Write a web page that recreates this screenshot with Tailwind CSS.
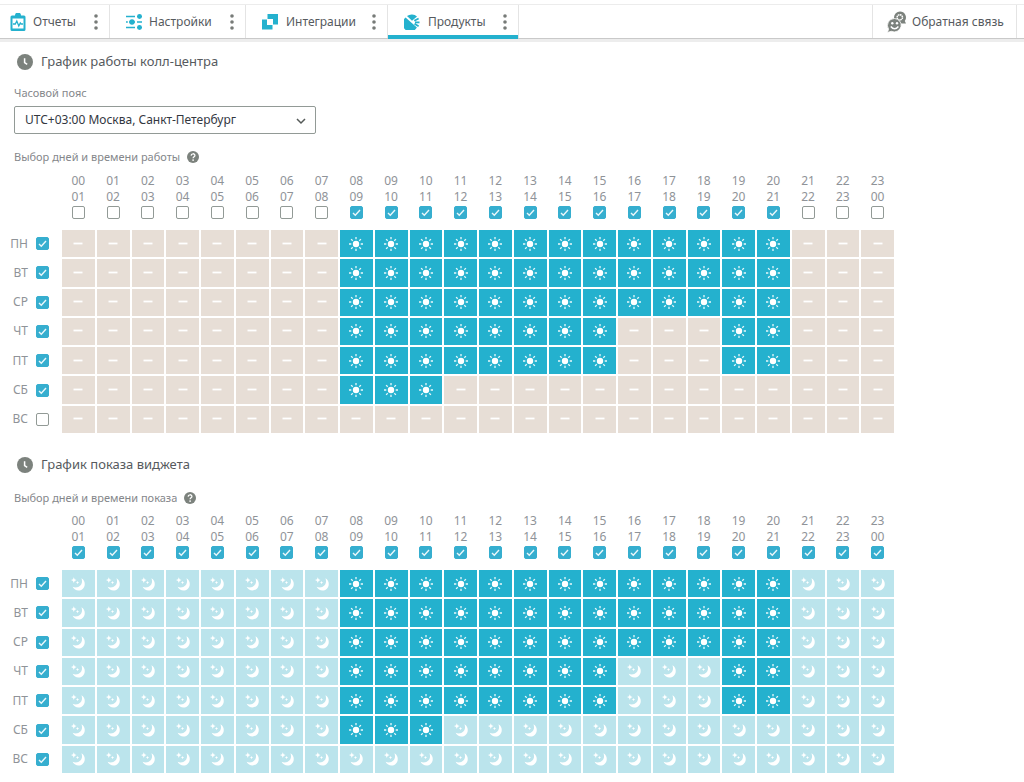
<!DOCTYPE html>
<html lang="ru">
<head>
<meta charset="utf-8">
<meta name="viewport" content="width=device-width, initial-scale=1">
<title>График работы</title>
<script src="https://cdn.jsdelivr.net/npm/@tailwindcss/browser@4"></script>
</head>
<body class="bg-white font-['Noto_Sans',sans-serif] text-[#565a5e]">

<svg class="hidden" aria-hidden="true">
  <symbol id="dots" viewBox="0 0 4 16"><circle cx="2" cy="2" r="1.8"/><circle cx="2" cy="8" r="1.8"/><circle cx="2" cy="14" r="1.8"/></symbol>
  <symbol id="check" viewBox="0 0 13 13"><path d="M3 7l2.300 2.300L10 4" fill="none" stroke="#fff" stroke-opacity=".9" stroke-width="1.400"/></symbol>
  <symbol id="clock" viewBox="0 0 16 16"><circle cx="8" cy="8" r="8" fill="#7c827d"/><path d="M7.600 4.200v4.300l2.600 1.800" fill="none" stroke="#fff" stroke-width="1.500"/></symbol>
  <symbol id="help" viewBox="0 0 12 12"><circle cx="6" cy="6" r="6" fill="#7c827d"/><path d="M4.100 4.600c.1-2.400 3.800-2.400 3.800-.2 0 1.400-1.800 1.400-1.800 2.900" fill="none" stroke="#fff" stroke-width="1.300"/><circle cx="6.100" cy="9.100" r=".85" fill="#fff"/></symbol>
  <symbol id="dash" viewBox="0 0 14 14"><path d="M2.500 6.500h9" stroke="#fff" stroke-width="1.800"/></symbol>
  <symbol id="sun" viewBox="0 0 14 14"><circle cx="7" cy="7" r="3.200" fill="#fff"/><g stroke="#fff" stroke-opacity=".9" stroke-width="1.300"><path d="M7 0v2.300M7 11.700V14M0 7h2.300M11.700 7H14M2.100 2.100l1.600 1.600M10.300 10.300l1.600 1.600M2.100 11.900l1.600-1.600M10.300 3.700l1.600-1.600"/></g></symbol>
  <symbol id="moon" viewBox="0 0 14 14"><path d="M10.400 1.200C14.600 3.300 14.700 9.200 11.600 11.900C8.600 14.500 3.400 13.700 1.600 9.700C4.300 10.900 7.500 10.500 9.300 8.500C11.200 6.500 11.500 3.700 10.400 1.200z" fill="#fff"/><path d="M2.800 .3l.8 2 2 .8-2 .8-.8 2-.8-2-2-.8 2-.8z" fill="#fff"/><path d="M6.500 4l.5 1.100 1.100.5L7 6.100l-.5 1.100L6 6.100l-1.100-.5L6 5.100z" fill="#fff"/></symbol>
</svg>

<header class="mt-1 border-t border-[#ececec] border-b border-b-[#c9c9c9]">
  <nav class="flex h-[33px] text-[12px]">
    <div class="flex w-[110px] items-center border-r border-[#e4e4e4] pl-[10px] pr-[11px]">
      <a href="#" class="flex items-center gap-[7px]">
        <svg class="h-[18px] w-4" viewBox="0 0 16 18"><path d="M2 2.500h3a3 3 0 0 1 6 0h3a1.500 1.500 0 0 1 1.500 1.500v12.500a1.500 1.500 0 0 1-1.500 1.500H2a1.500 1.500 0 0 1-1.500-1.500V4A1.500 1.500 0 0 1 2 2.500z" fill="#24b1ce"/><path d="M2.500 5.500h11v10h-11z" fill="#fff"/><path d="M3 11h2.300l1.500-3 2 5 1.500-3 .8 1H13" fill="none" stroke="#24b1ce" stroke-width="1.300"/></svg>
        Отчеты</a>
      <button type="button" aria-label="Меню: Отчеты" class="ml-auto"><svg class="h-4 w-1 fill-[#777b78]"><use href="#dots"/></svg></button>
    </div>
    <div class="flex w-[136px] items-center border-r border-[#e4e4e4] pl-4 pr-[11px]">
      <a href="#" class="flex items-center gap-[7px]">
        <svg class="h-4 w-4" viewBox="0 0 16 16"><path d="M0 2.500h9M11 2.500h5M0 8h1.800M3 8h6M11 8h5M0 13.500h9M11 13.500h5" stroke="#24b1ce" stroke-width="1.500"/><g fill="#24b1ce"><circle cx="13.500" cy="2.500" r="2.400"/><circle cx="6" cy="8" r="2.700"/><circle cx="13.500" cy="13.500" r="2.400"/></g></svg>
        Настройки</a>
      <button type="button" aria-label="Меню: Настройки" class="ml-auto"><svg class="h-4 w-1 fill-[#777b78]"><use href="#dots"/></svg></button>
    </div>
    <div class="flex w-[142px] items-center border-r border-[#e4e4e4] pl-4 pr-[11px]">
      <a href="#" class="flex items-center gap-2">
        <svg class="h-4 w-4" viewBox="0 0 16 16"><path d="M5.500 0H16v10.500h-5V5H5.500zM0 5.500h5V11h5.500v4.500H0z" fill="#24b1ce"/></svg>
        Интеграции</a>
      <button type="button" aria-label="Меню: Интеграции" class="ml-auto"><svg class="h-4 w-1 fill-[#777b78]"><use href="#dots"/></svg></button>
    </div>
    <div class="relative flex w-[131px] items-center border-r border-[#e4e4e4] pl-4 pr-[11px]">
      <a href="#" aria-current="page" class="flex items-center gap-2">
        <svg class="h-4 w-4" viewBox="0 0 16 16"><path d="M1.600 3.600L12.900 13.600A7.700 7.700 0 1 1 1.600 3.600z" fill="#24b1ce"/><path d="M3 2A7.700 7.700 0 0 1 13 2.600L8 6.800z" fill="#24b1ce"/><path d="M10.300 6.800L14.600 4.400M11 8.300H15.500M10.500 9.800L14.600 12.200" stroke="#24b1ce" stroke-width="1.700"/></svg>
        Продукты</a>
      <button type="button" aria-label="Меню: Продукты" class="ml-auto"><svg class="h-4 w-1 fill-[#777b78]"><use href="#dots"/></svg></button>
      <span class="absolute -bottom-px left-0 right-0 h-1 bg-[#24b1ce]"></span>
    </div>
    <a href="#" class="ml-auto mr-[7px] flex w-[145px] items-center gap-[5px] border-x border-[#e4e4e4] pl-[14px]">
      <svg class="h-[22px] w-5" viewBox="0 0 20 22"><path d="M13 .5a6 6 0 0 1 4.800 9.500l1.200 2.500h-6a6 6 0 0 1 0-12z" fill="#7c827d"/><circle cx="12.800" cy="6.400" r="2.700" fill="none" stroke="#fff" stroke-width="1.500" stroke-dasharray="1.600 .5"/><path d="M7.500 7.500a7 6.700 0 1 1-3.200 12.800L.4 21.500l1.200-3.300A6.900 6.900 0 0 1 7.500 7.500z" fill="#7c827d" stroke="#fff" stroke-width=".8"/><circle cx="5.300" cy="12.300" r="1.200" fill="#fff"/><circle cx="10" cy="12.300" r="1.200" fill="#fff"/><path d="M3.800 15.500q3.800 4.500 7.600 0" fill="none" stroke="#fff" stroke-width="1.500"/></svg>
      Обратная связь</a>
  </nav>
</header>
<div class="h-[3px] bg-[#ededed]"></div>

<main>
  <section class="pt-[10px]">
    <h2 class="flex h-5 items-center gap-2 pl-[17px] text-[13px]"><svg class="h-4 w-4"><use href="#clock"/></svg>График работы колл-центра</h2>
    <label for="tz" class="mt-[13px] block pl-[14px] text-[11px] leading-4 text-[#85878b]">Часовой пояс</label>
    <div class="relative ml-[14px] mt-[5px] h-7 w-[302px]">
      <select id="tz" class="h-full w-full appearance-none rounded-[2px] border border-[#929a96] bg-white pl-[10px] text-[12px] text-[#33373f]"><option>UTC+03:00 Москва, Санкт-Петербург</option></select>
      <svg class="pointer-events-none absolute right-[10px] top-[11px] h-2 w-[10px]" viewBox="0 0 10 8"><path d="M1 2l4 4 4-4" fill="none" stroke="#555a58" stroke-width="1.500"/></svg>
    </div>
    <p class="mt-[15px] flex h-4 items-center gap-[7px] pl-[14px] text-[11px] text-[#85878b]">Выбор дней и времени работы<button type="button" aria-label="Справка о времени работы"><svg class="h-3 w-3"><use href="#help"/></svg></button></p>
    <div data-schedule="work" class="mt-[6px] pl-2"></div>
  </section>
  <section class="pt-5">
    <h2 class="flex h-5 items-center gap-2 pl-[17px] text-[13px]"><svg class="h-4 w-4"><use href="#clock"/></svg>График показа виджета</h2>
    <p class="mt-[15px] flex h-4 items-center gap-[7px] pl-[14px] text-[11px] text-[#85878b]">Выбор дней и времени показа<button type="button" aria-label="Справка о времени показа"><svg class="h-3 w-3"><use href="#help"/></svg></button></p>
    <div data-schedule="show" class="mt-[5px] pl-2"></div>
  </section>
</main>

<script>
const days = ['ПН', 'ВТ', 'СР', 'ЧТ', 'ПТ', 'СБ', 'ВС'];
const pad = n => String(n % 24).padStart(2, '0');
// Working hours per weekday
const isDay = (d, h) => {
  if (d === 6 || h < 8 || h > 20) return false;
  if (d === 5) return h < 11;
  return d < 3 || h < 16 || h > 18;
};
const box = (label, on) => `<label class="relative block h-[13px] w-[13px]"><input type="checkbox" aria-label="${label}" ${on ? 'checked' : ''} class="peer block h-[13px] w-[13px] appearance-none rounded-[2px] border border-[#929a96] bg-white checked:border-[#36aecf] checked:bg-[#36aecf]"><svg class="pointer-events-none absolute inset-0 hidden h-[13px] w-[13px] peer-checked:block"><use href="#check"/></svg></label>`;
const tones = { sun: 'bg-[#24b1ce]', moon: 'bg-[#bbe4ec]', dash: 'bg-[#e7ded6]' };

document.querySelectorAll('[data-schedule]').forEach(el => {
  const night = el.dataset.schedule === 'show';
  let html = '<table class="h-[264px] w-full max-w-[888px] table-fixed border-separate border-spacing-[2px] text-[12px] text-[#8f9398]"><thead><tr class="h-[55px]"><td class="w-[50px]"></td>';
  for (let h = 0; h < 24; h++) {
    html += `<th scope="col" class="p-0 align-top font-normal leading-4">${pad(h)}<br>${pad(h + 1)}<div class="mt-px flex justify-center">${box('Час ' + pad(h), night || (h > 7 && h < 21))}</div></th>`;
  }
  html += '</tr></thead><tbody>';
  days.forEach((name, d) => {
    html += `<tr><th scope="row" class="p-0 font-normal leading-4"><div class="flex items-center justify-end gap-2 pr-[11px]">${name}${box(name, night || d < 6)}</div></th>`;
    for (let h = 0; h < 24; h++) {
      const kind = isDay(d, h) ? 'sun' : night ? 'moon' : 'dash';
      html += `<td class="p-0 ${tones[kind]}"><button type="button" aria-label="${name} ${pad(h)}:00" class="flex w-full items-center justify-center"><svg class="h-[14px] w-[14px]"><use href="#${kind}"/></svg></button></td>`;
    }
    html += '</tr>';
  });
  el.innerHTML = html + '</tbody></table>';
});
</script>
</body>
</html>
